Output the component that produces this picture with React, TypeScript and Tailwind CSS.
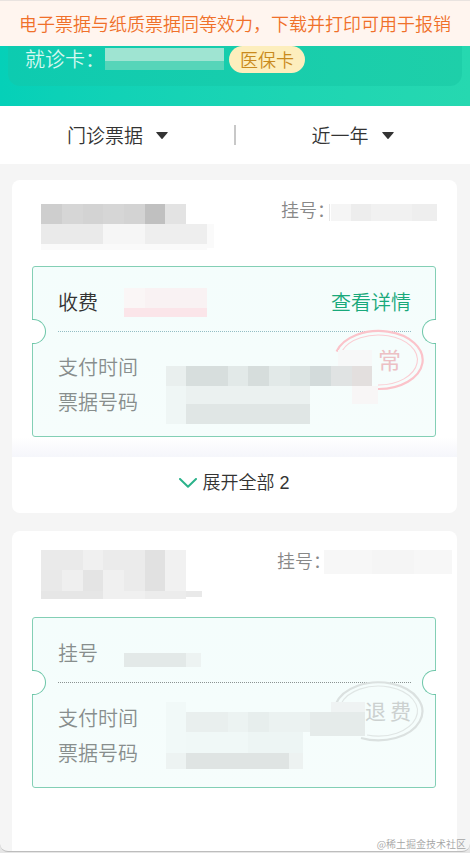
import React from "react";

// x, y, width, height, fill
type Cell = [number, number, number, number, string];

interface Bill {
  id: string;
  kind: string;
  muted: boolean;
  detail?: string;
  more?: number;
  status: "normal" | "refund";
  name: Cell[];
  visit: Cell[];
  amount: Cell[];
  info: Cell[];
}

const bills: Bill[] = [
  {
    id: "bill-1",
    kind: "收费",
    muted: false,
    detail: "查看详情",
    more: 2,
    status: "normal",
    name: [
      [0, 0, 21, 20, "#cecece"],
      [21, 0, 21, 20, "#d6d6d6"],
      [42, 0, 20, 20, "#d3d3d3"],
      [62, 0, 21, 20, "#d6d6d6"],
      [83, 0, 21, 20, "#d3d3d3"],
      [104, 0, 20, 20, "#c0c0c0"],
      [124, 0, 21, 20, "#e3e3e3"],
      [0, 20, 62, 20, "#eaeaea"],
      [62, 20, 42, 20, "#f6f6f6"],
      [104, 20, 62, 20, "#eeeeee"],
      [166, 20, 7, 24, "#fafafa"],
      [0, 40, 166, 6, "#fafafa"],
    ],
    visit: [
      [-6, 0, 1, 17, "#e6e6e6"],
      [-4, 0, 20, 17, "#f5f5f5"],
      [16, 0, 20, 17, "#ededed"],
      [36, 0, 41, 17, "#f1f1f1"],
      [77, 0, 25, 17, "#eeeeee"],
    ],
    amount: [
      [0, 0, 21, 20, "#faf6f6"],
      [21, 0, 62, 20, "#f9f2f3"],
      [0, 20, 83, 9, "#fbe5e9"],
    ],
    info: [
      [172, 1, 34, 16, "#f7f8f8"],
      [186, 37, 26, 18, "#f8f6f6"],
      [0, 17, 20, 20, "#e9efee"],
      [20, 17, 42, 20, "#d7dedd"],
      [62, 17, 20, 20, "#e2e9e8"],
      [82, 17, 21, 20, "#d6dddc"],
      [103, 17, 21, 20, "#e2e9e8"],
      [124, 17, 20, 20, "#dce4e3"],
      [144, 17, 21, 20, "#d3dbdb"],
      [165, 17, 21, 20, "#e0e3e3"],
      [186, 17, 20, 20, "#e3dfde"],
      [20, 37, 124, 18, "#ebf1f0"],
      [0, 37, 20, 38, "#eff6f5"],
      [20, 55, 124, 20, "#e0e6e5"],
    ],
  },
  {
    id: "bill-2",
    kind: "挂号",
    muted: true,
    status: "refund",
    name: [
      [0, 0, 42, 20, "#eaeaea"],
      [42, 0, 20, 20, "#f0f0f0"],
      [62, 0, 42, 20, "#ebebeb"],
      [104, 0, 20, 41, "#e1e1e1"],
      [124, 0, 21, 41, "#f1f1f1"],
      [0, 20, 21, 21, "#e9e9e9"],
      [21, 20, 21, 21, "#efefef"],
      [42, 20, 20, 21, "#e4e4e4"],
      [62, 20, 21, 21, "#f0f0f0"],
      [83, 20, 21, 21, "#ebebeb"],
      [0, 41, 62, 8, "#e6e6e6"],
      [62, 41, 42, 8, "#f0f0f0"],
      [104, 41, 41, 8, "#ececec"],
      [145, 41, 16, 6, "#e9e9e9"],
    ],
    visit: [
      [-7, -5, 48, 24, "#f7f7f7"],
      [41, -5, 42, 24, "#f5f5f5"],
      [83, -5, 38, 24, "#f7f7f7"],
    ],
    amount: [
      [0, 14, 62, 14, "#e3e9e8"],
      [62, 14, 15, 14, "#edf3f2"],
    ],
    info: [
      [165, 2, 34, 10, "#eff3f3"],
      [0, 2, 20, 51, "#f1f9f8"],
      [20, 12, 42, 20, "#e9efee"],
      [62, 12, 20, 20, "#ecf3f2"],
      [82, 12, 21, 20, "#e7eeed"],
      [103, 12, 41, 20, "#ebf2f1"],
      [144, 12, 55, 24, "#e5ebea"],
      [20, 32, 62, 21, "#f0f8f7"],
      [82, 32, 55, 21, "#edf5f4"],
      [0, 53, 20, 16, "#edf3f2"],
      [20, 53, 103, 16, "#dfe4e3"],
      [123, 53, 14, 16, "#edf2f1"],
    ],
  },
];

// Pixelated block that hides private data
const Mosaic: React.FC<{ cells: Cell[]; className: string }> = ({ cells, className }) => (
  <svg className={`shrink-0 overflow-visible ${className}`} shapeRendering="crispEdges" aria-hidden="true">
    {cells.map(([x, y, w, h, fill]) => (
      <rect key={`${x}-${y}`} x={x} y={y} width={w} height={h} fill={fill} />
    ))}
  </svg>
);

const Stamp: React.FC<{ status: Bill["status"] }> = ({ status }) => (
  <svg
    className="absolute top-[62px] right-[10px] h-[62px] w-[92px]"
    viewBox="0 0 92 62"
    fill="none"
    aria-hidden="true"
  >
    {status === "normal" ? (
      <>
        <path d="M3.6 22.5 A44 29 0 1 1 45 60" stroke="#fbc3ca" strokeWidth="2.2" />
        <path d="M9 22 A39 25 0 1 1 45 56" stroke="#fbcdd3" strokeWidth="1.1" />
        <text x="45" y="40" fontSize="23" fontWeight="400" fill="#ecc0c4">常</text>
      </>
    ) : (
      <>
        <path d="M2.8 24 A44 29 0 1 1 28 58" stroke="#dbe1e0" strokeWidth="2.2" />
        <path d="M8 24 A39 25 0 1 1 34 55" stroke="#e0e6e5" strokeWidth="1.1" />
        <text x="32" y="39" fontSize="21" fontWeight="400" fill="#ccd1d0">退</text>
        <text x="57" y="39" fontSize="21" fontWeight="400" fill="#ccd1d0">费</text>
      </>
    )}
  </svg>
);

const Caret = () => (
  <svg className="h-[7px] w-3" viewBox="0 0 12 7" aria-hidden="true">
    <path d="M0.6 0 H11.4 Q12 0 11.6 0.7 L6.5 6.7 Q6 7.2 5.5 6.7 L0.4 0.7 Q0 0 0.6 0Z" fill="#333" />
  </svg>
);

const Filter: React.FC<{ name: string; options: string[] }> = ({ name, options }) => (
  <label className="flex flex-1 items-center justify-center gap-[13px]">
    <select
      aria-label={name}
      className="field-sizing-content appearance-none bg-transparent text-[19px] leading-7 text-[#333] outline-none"
    >
      {options.map((option) => (
        <option key={option}>{option}</option>
      ))}
    </select>
    <Caret />
  </label>
);

const Ticket: React.FC<{ bill: Bill }> = ({ bill }) => (
  <div className="relative mr-[21px] ml-5 rounded-[3px] border border-[#83cfb5] bg-linear-to-b from-[#f4fdfc] to-[#f6fdfc] pr-6 pl-[25px]">
    <span className="absolute top-[52px] -left-px h-[25px] w-[14px] rounded-r-full border border-l-0 border-[#6cc6a8] bg-white" />
    <span className="absolute top-[52px] -right-px h-[25px] w-[14px] rounded-l-full border border-r-0 border-[#6cc6a8] bg-white" />

    <div className="flex h-16 items-center pt-1.5 text-xl">
      <span className={bill.muted ? "text-[#888e8d]" : "text-[#333]"}>{bill.kind}</span>
      <Mosaic cells={bill.amount} className="ml-[26px] h-7 w-[83px]" />
      {bill.detail && (
        <a href="#detail" className="ml-auto text-[#19a97b]">
          {bill.detail}
        </a>
      )}
    </div>

    <div className={`border-t border-dotted ${bill.muted ? "border-[#8b9392]" : "border-[#93bdc4]"}`} />
    <Stamp status={bill.status} />

    <div className="relative flex gap-7 py-[17px] text-xl leading-[35px] text-[#888e8d]">
      <div>
        <p>支付时间</p>
        <p>票据号码</p>
      </div>
      <Mosaic cells={bill.info} className="h-[70px] w-[206px]" />
    </div>
  </div>
);

const BillCard: React.FC<{ bill: Bill }> = ({ bill }) => (
  <section className="rounded-lg bg-white last:flex-1 last:rounded-b-none">
    <div className="flex h-[86px] items-start pr-5 pl-[29px]">
      <Mosaic cells={bill.name} className={bill.muted ? "mt-[19px] h-12 w-[161px]" : "mt-6 h-12 w-[166px]"} />
      <span className="mt-4 ml-auto text-lg leading-[26px] text-[#888]">挂号：</span>
      <Mosaic cells={bill.visit} className={bill.muted ? "mt-6 h-4 w-[106px]" : "mt-6 h-4 w-[102px]"} />
    </div>

    <Ticket bill={bill} />

    {bill.more && (
      <>
        <div className="h-5 bg-linear-to-b from-white to-[#f5f6fb]" />
        <button
          type="button"
          className="flex h-14 w-full items-center justify-center gap-[5px] pb-1 font-['Liberation_Sans','Noto_Sans_CJK_SC',sans-serif] text-lg text-[#333]"
        >
          <svg className="h-[10px] w-[18px]" viewBox="0 0 18 10" fill="none" aria-hidden="true">
            <path
              d="M1 1 L9 8.7 L17 1"
              stroke="#2bb28a"
              strokeWidth="2"
              strokeLinecap="round"
              strokeLinejoin="round"
            />
          </svg>
          <span>展开全部 {bill.more}</span>
        </button>
      </>
    )}
  </section>
);

const App: React.FC = () => {
  return (
    <div className="flex min-h-screen flex-col bg-[#e6e6e6] pb-px font-['Noto_Sans_CJK_SC',sans-serif] font-[350]">
      <div className="relative flex flex-1 flex-col overflow-hidden rounded-b-lg border-b border-[#bdbdbd] bg-[#f5f5f5]">
        <p className="flex h-[46px] items-center justify-center border-t border-[#e9e3e0] bg-[#fff5ef] pb-0.5 text-lg whitespace-nowrap text-[#f0702a]">
          电子票据与纸质票据同等效力，下载并打印可用于报销
        </p>

        <header className="bg-linear-to-r from-[#05d0b8] to-[#26d8b0] px-2 pb-5">
          <div className="flex h-10 items-start rounded-b-xl bg-linear-to-r from-[#0dcbb0] to-[#1ecfa9] px-[17px]">
            <span className="text-xl leading-[26px] text-[#d5f8f0]">就诊卡：</span>
            <svg className="mt-0.5 h-[22px] w-[119px]" shapeRendering="crispEdges" aria-hidden="true">
              <rect width="119" height="13" fill="#9fe4d2" />
              <rect y="13" width="119" height="9" fill="#56d5b9" />
            </svg>
            <span className="ml-[5px] rounded-full bg-[#fdeebd] px-[11px] text-lg leading-[27px] text-[#c98a1c]">
              医保卡
            </span>
          </div>
        </header>

        <nav className="flex h-[58px] items-center bg-white">
          <Filter name="票据类型" options={["门诊票据", "住院票据"]} />
          <span className="-mx-px h-5 w-0.5 bg-[#c8c8c8]" />
          <Filter name="时间范围" options={["近一年", "近半年"]} />
        </nav>

        <main className="flex flex-1 flex-col gap-[18px] pt-4 pr-[13px] pl-3">
          {bills.map((bill) => (
            <BillCard key={bill.id} bill={bill} />
          ))}
        </main>

        <span className="absolute right-1 bottom-0 text-[10px] leading-[14px] text-[#a5a5a5]">@稀土掘金技术社区</span>
      </div>
    </div>
  );
};

export default App;
